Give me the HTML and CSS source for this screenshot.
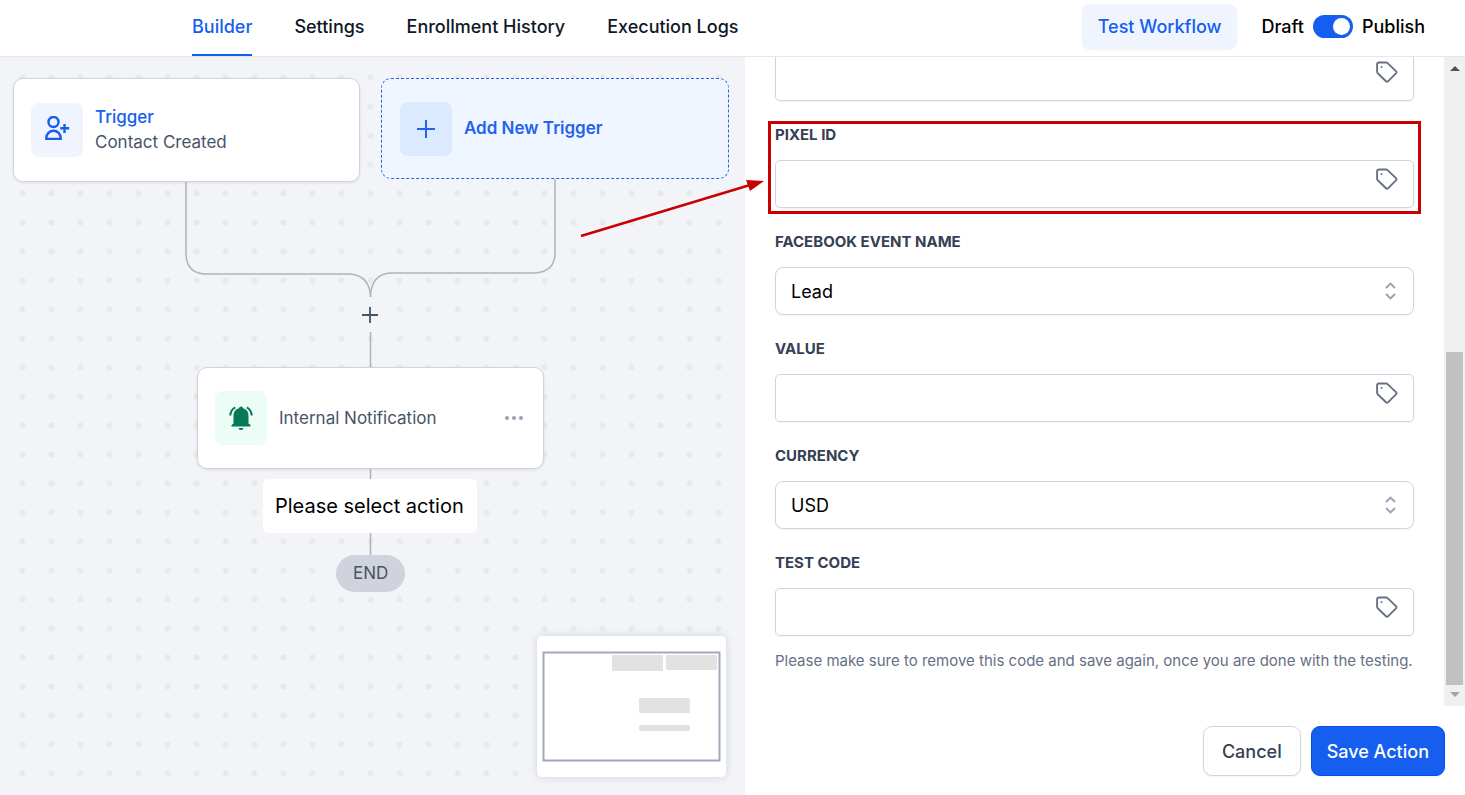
FILE: index.html
```html
<!DOCTYPE html>
<html lang="en">
<head>
<meta charset="utf-8">
<meta name="viewport" content="width=device-width, initial-scale=1">
<title>Workflow Builder</title>
<link rel="stylesheet" href="styles.css">
</head>
<body>
<svg width="0" height="0" class="defs" aria-hidden="true">
  <symbol id="tag" viewBox="0 0 24 24"><path d="M4 2.500h7.200a2 2 0 0 1 1.400.6l8.600 8.300a1.200 1.200 0 0 1 0 1.700l-8.200 8.200a1.400 1.400 0 0 1-2 0L2.700 13.200a2 2 0 0 1-.6-1.400V4.500a2 2 0 0 1 1.900-2z" fill="none" stroke="currentColor" stroke-width="1.900" stroke-linejoin="round"/><circle cx="6.500" cy="7" r="1" fill="currentColor"/></symbol>
  <symbol id="updown" viewBox="0 0 12 18"><path d="M1.500 6 6 1.500 10.500 6M1.500 12 6 16.500 10.500 12" fill="none" stroke="currentColor" stroke-width="1.900"/></symbol>
</svg>
<header class="topbar">
  <nav class="tabs">
    <a href="#builder" class="tab active" aria-current="page">Builder</a>
    <a href="#settings" class="tab">Settings</a>
    <a href="#history" class="tab">Enrollment History</a>
    <a href="#logs" class="tab">Execution Logs</a>
  </nav>
  <div class="tools">
    <button type="button" class="test">Test Workflow</button>
    <label class="publish"><span>Draft</span><input type="checkbox" class="switch" checked><span>Publish</span></label>
  </div>
</header>
<main class="work">
  <section class="canvas" aria-label="Workflow canvas">
    <svg class="wires" width="745" height="560" viewBox="0 0 745 560" fill="none" stroke="#b1b3b8" stroke-width="1.500" aria-hidden="true">
      <path d="M186 124V196Q186 217 207 217H350Q370 219 370.500 240"/>
      <path d="M555 122V196Q555 215 534 216H391Q371 217 370.500 240"/>
      <path d="M370.500 275V310M370.500 411V422M370.500 476V499"/>
    </svg>
    <article class="card trigger">
      <span class="tile blue"><svg width="28" height="28" viewBox="0 0 28 28" fill="none" stroke="#155eef" stroke-width="2.400" aria-hidden="true"><circle cx="10.500" cy="6" r="5"/><path d="M3.300 22.900v-1a7.200 7.200 0 0 1 14.400 0v1zM21.500 8v9M17.200 12.200h9"/></svg></span>
      <div><div class="card-kind">Trigger</div><div>Contact Created</div></div>
    </article>
    <button type="button" class="card add">
      <span class="tile sky"><svg width="18" height="18" viewBox="0 0 18 18" stroke="#2563eb" stroke-width="2" aria-hidden="true"><path d="M9 0v18M0 9h18"/></svg></span>
      <span>Add New Trigger</span>
    </button>
    <button type="button" class="insert" aria-label="Add step"><svg width="16" height="16" viewBox="0 0 16 16" stroke="#475467" stroke-width="1.800"><path d="M8 0v16M0 8h16"/></svg></button>
    <article class="card step">
      <span class="tile green"><svg width="26" height="26" viewBox="0 0 26 26" aria-hidden="true"><path d="M13 1.500a2 2 0 0 1 2 1.800c3.500 1 5.500 3.500 5.500 7.200v8l2 1.500v1.500h-19V20l2-1.500v-8c0-3.700 2-6.200 5.500-7.200a2 2 0 0 1 2-1.800zM10.500 23h5a2.500 2 0 0 1-5 0z" fill="#047857"/><path d="M7.200 2.300Q2.500 5 2.300 10.500M18.800 2.300Q23.500 5 23.700 10.500" fill="none" stroke="#047857" stroke-width="2"/></svg></span>
      <span class="step-name">Internal Notification</span>
      <button type="button" class="more" aria-label="More options"><svg width="18" height="6" viewBox="0 0 18 6" fill="#98a2b3"><circle cx="2" cy="3" r="2"/><circle cx="9" cy="3" r="2"/><circle cx="16" cy="3" r="2"/></svg></button>
    </article>
    <div class="select-action">Please select action</div>
    <div class="end">END</div>
    <div class="minimap" aria-hidden="true">
      <svg width="189" height="141" viewBox="0 0 189 141"><g fill="#e2e2e2"><rect x="75" y="19" width="51" height="16" rx="1"/><rect x="129" y="19" width="51" height="15" rx="1"/><rect x="102" y="62" width="51" height="15" rx="1"/><rect x="102" y="89" width="51" height="6" rx="2"/></g><rect x="6.500" y="16.500" width="176" height="108" fill="none" stroke="#a1a9b9" stroke-width="2"/></svg>
    </div>
  </section>
  <aside class="panel">
    <div class="scroll">
      <form class="form" id="action">
        <div class="field"><div class="control"><input type="text" aria-label="Access token"><svg class="tag"><use href="#tag"/></svg></div></div>
        <div class="field marked"><label for="pixel">PIXEL ID</label><div class="control"><input type="text" id="pixel"><svg class="tag"><use href="#tag"/></svg></div></div>
        <div class="field"><label for="event">FACEBOOK EVENT NAME</label><div class="control"><select id="event"><option>Lead</option></select><svg class="updown"><use href="#updown"/></svg></div></div>
        <div class="field"><label for="value">VALUE</label><div class="control"><input type="text" id="value"><svg class="tag"><use href="#tag"/></svg></div></div>
        <div class="field"><label for="currency">CURRENCY</label><div class="control"><select id="currency"><option>USD</option></select><svg class="updown"><use href="#updown"/></svg></div></div>
        <div class="field"><label for="code">TEST CODE</label><div class="control"><input type="text" id="code"><svg class="tag"><use href="#tag"/></svg></div></div>
        <p class="hint">Please make sure to remove this code and save again, once you are done with the testing.</p>
      </form>
      <div class="bar" aria-hidden="true">
        <svg width="21" height="21" viewBox="0 0 21 21"><path d="M6 14h10l-5-5z" fill="#505050"/></svg>
        <span class="gap"></span><span class="thumb"></span>
        <svg width="21" height="21" viewBox="0 0 21 21"><path d="M6 7h10l-5 5z" fill="#a3a3a3"/></svg>
      </div>
    </div>
    <footer class="actions">
      <button type="button" class="btn">Cancel</button>
      <button type="submit" form="action" class="btn primary">Save Action</button>
    </footer>
  </aside>
  <svg class="arrow" width="185" height="60" viewBox="0 0 185 60" aria-hidden="true"><path d="M1 57 170 6" stroke="#c90000" stroke-width="2.500"/><path d="M184 2 166 1 170 12z" fill="#c90000"/></svg>
</main>
</body>
</html>
```
FILE: styles.css
```css
* { box-sizing: border-box; }
body { margin: 0; min-height: 100vh; display: flex; flex-direction: column; background: #fff; color: #000; font-family: Inter, "Liberation Sans", sans-serif; font-size: 18px; }
button, input, select { font: inherit; color: inherit; margin: 0; }
button { cursor: pointer; }
.defs { position: absolute; }

.topbar { display: flex; justify-content: space-between; height: 57px; padding: 0 40px 0 192px; border-bottom: 1px solid #e4e7ec; font-weight: 500; }
.tabs { display: flex; gap: 42px; }
.tab { display: flex; align-items: center; padding-bottom: 2px; border-bottom: 2px solid transparent; color: #101828; text-decoration: none; white-space: nowrap; }
.tab.active { color: #155eef; border-color: #155eef; }
.tools { display: flex; align-items: center; gap: 24px; padding-bottom: 3px; }
.test { height: 45px; padding: 0 16px; border: 0; border-radius: 8px; background: #eff4ff; color: #155eef; box-shadow: 0 1px 2px #1018280d; }
.publish { display: flex; align-items: center; gap: 9px; }
.switch { appearance: none; display: flex; align-items: center; justify-content: flex-end; width: 40px; height: 23px; padding: 3px; border-radius: 12px; background: #155eef; }
.switch::before { content: ""; width: 17px; height: 17px; border-radius: 50%; background: #fff; }

.work { position: relative; flex: 1; display: grid; grid-template-columns: 745fr 720fr; }
.canvas { position: relative; overflow: hidden; background: #f2f4f8 radial-gradient(circle, #e8e9e9 2px, #e8e9e900 4px) 8px 6px / 29px 29px; color: #475467; font-size: 17px; }
.wires { position: absolute; left: 0; top: 0; }
.card { position: absolute; display: flex; align-items: center; gap: 12px; width: 347px; height: 102px; padding: 0 17px; border: 1px solid #d0d5dd; border-radius: 10px; background: #fff; box-shadow: 0 1px 3px #1018281a; line-height: 25px; }
.trigger { left: 13px; top: 21px; height: 104px; }
.card-kind { color: #155eef; font-weight: 500; }
.add { left: 381px; top: 21px; width: 348px; height: 101px; padding: 0 18px; border: 1px dashed #2563eb; background: #eff6ff; color: #2563eb; font-weight: 600; box-shadow: none; }
.step { left: 197px; top: 310px; }
.tile { display: grid; place-items: center; width: 52px; height: 54px; border-radius: 8px; }
.blue { background: #eff4ff; }
.sky { background: #dbeafe; }
.green { background: #ecfdf5; }
.more { display: flex; margin-left: auto; padding: 3px; border: 0; background: none; }
.insert { position: absolute; left: 354px; top: 242px; display: grid; place-items: center; width: 32px; height: 32px; padding: 0; border: 0; border-radius: 50%; background: #f2f4f8; }
.select-action { position: absolute; left: 263px; top: 422px; padding: 15px 13px 15px 12px; border-radius: 5px; background: #fff; color: #000; font-size: 20px; line-height: 24px; white-space: nowrap; }
.end { position: absolute; left: 336px; top: 498px; padding: 0 17px; border-radius: 19px; background: #d0d3dc; line-height: 37px; }
.minimap { position: absolute; right: 19px; bottom: 18px; display: flex; border-radius: 5px; background: #fff; box-shadow: 0 0 9px #10182826; }

.panel { display: flex; flex-direction: column; min-width: 0; }
.scroll { flex: 1 1 0px; display: flex; min-height: 0; }
.form { flex: 1; display: flex; flex-direction: column; justify-content: flex-end; gap: 23px; min-width: 0; overflow: hidden; padding: 0 30px 33px; }
.field { position: relative; display: flex; flex-direction: column; gap: 14px; padding-bottom: 1px; }
.field + .field { margin-top: -1px; }
.field label { color: #344054; font-size: 15px; font-weight: 700; line-height: 22px; }
.marked::after { content: ""; position: absolute; inset: -3px -7px -5px; border: 3px solid #c90000; pointer-events: none; }
.control { position: relative; display: flex; }
.control input, .control select { appearance: none; width: 100%; height: 48px; padding: 0 15px; border: 1px solid #d0d5dd; border-radius: 5px; background: #fff; box-shadow: 0 1px 2px #1018280d; }
.control select { border-radius: 8px; }
.tag { position: absolute; right: 15px; top: 7px; width: 24px; height: 24px; color: #667085; pointer-events: none; }
.updown { position: absolute; right: 17px; top: 15px; width: 13px; height: 18px; color: #98a2b3; pointer-events: none; }
.hint { margin: -11px 0 0; color: #667085; font-size: 15px; line-height: 24px; white-space: nowrap; }
.bar { display: flex; flex-direction: column; width: 21px; background: #f0f0f0; }
.gap { flex: 274; }
.thumb { flex: 333; margin: 0 2px; background: #c1c1c1; }
.actions { display: flex; justify-content: flex-end; gap: 10px; padding: 20px 20px 19px; }
.btn { height: 50px; padding: 0 18px; border: 1px solid #d0d5dd; border-radius: 9px; background: #fff; color: #344054; font-weight: 500; box-shadow: 0 1px 2px #1018280d; }
.primary { padding: 0 15px; border-color: #004eeb; background: #155eef; color: #fff; }
.arrow { position: absolute; left: 580px; top: 122px; pointer-events: none; }
```
